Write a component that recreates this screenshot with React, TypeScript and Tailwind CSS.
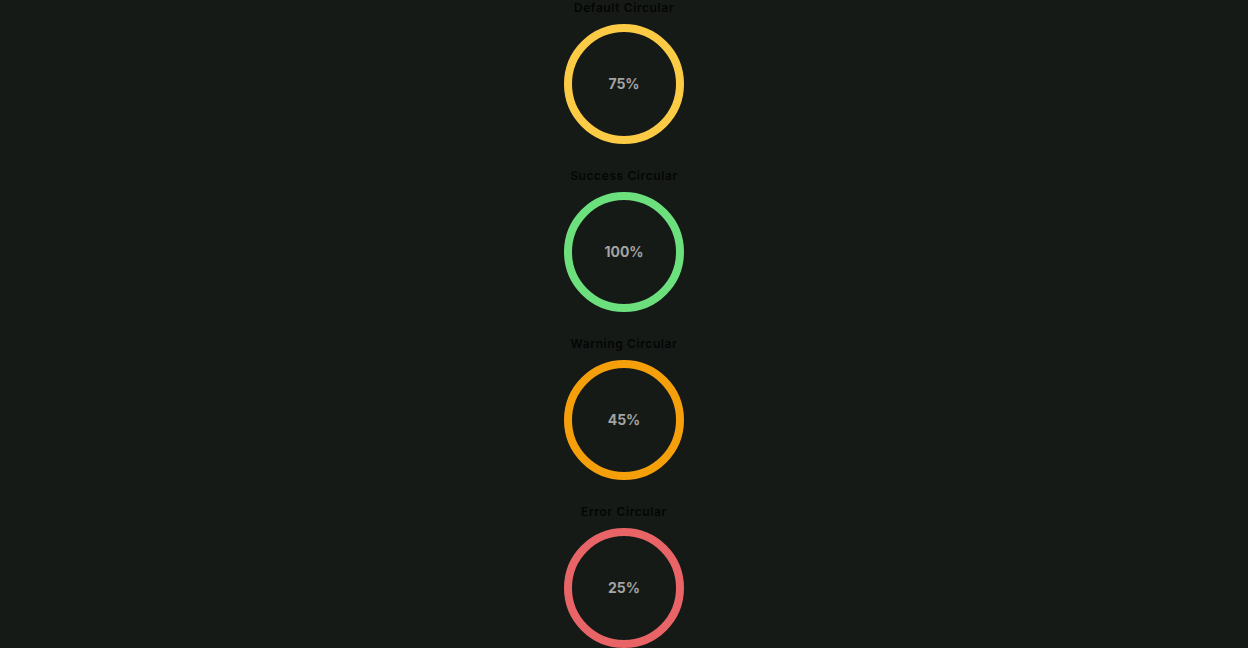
import React from "react";

const items = [
  { label: "Default Circular", value: "75%", color: "#fccb45" },
  { label: "Success Circular", value: "100%", color: "#6ce07c" },
  { label: "Warning Circular", value: "45%", color: "#f59f0a" },
  { label: "Error Circular", value: "25%", color: "#e96467" },
];

export default function App() {
  return (
    <div
      className="min-h-[648px] w-full bg-[#151a17] flex flex-col items-center gap-6"
      style={{ fontFamily: "Inter, 'Noto Sans', sans-serif" }}
    >
      {items.map((it) => (
        <div key={it.label} className="flex flex-col items-center gap-2">
          <div className="text-xs leading-4 font-semibold text-[#050505] tracking-[0.05em]">{it.label}</div>
          <div className="relative w-[120px] h-[120px]">
            <svg width="120" height="120" viewBox="0 0 120 120" className="block">
              <circle cx="60" cy="60" r="56" fill="none" stroke={it.color} strokeWidth="8" />
            </svg>
            <div className="absolute inset-0 flex items-center justify-center text-sm font-bold text-[#a3a3a3]">
              {it.value}
            </div>
          </div>
        </div>
      ))}
    </div>
  );
}
